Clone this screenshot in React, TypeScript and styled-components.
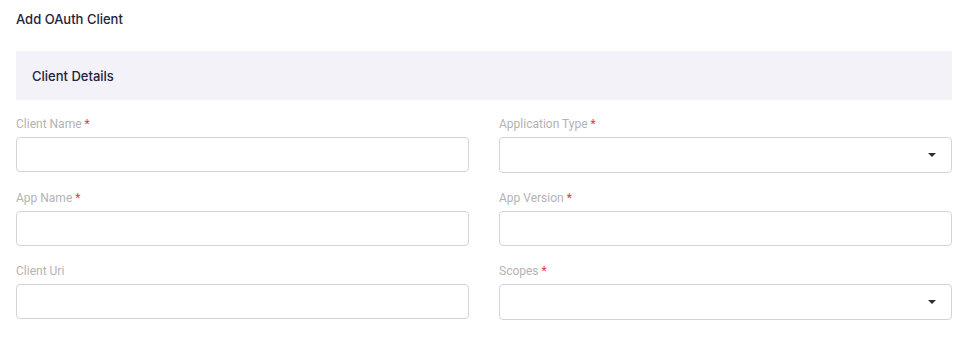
import React from 'react';
import styled, { createGlobalStyle } from 'styled-components';

const GlobalStyle = createGlobalStyle`
  html, body {
    margin: 0;
    padding: 0;
    background: #ffffff;
    font-family: Roboto, "Liberation Sans", Arial, sans-serif;
  }
`;

// ページ全体
const Page = styled.div`
  padding: 10px 23px 0 16px;
`;

const Title = styled.h1`
  margin: 0 0 23px;
  font-family: Inter, Roboto, sans-serif;
  font-size: 13px;
  line-height: 18px;
  font-weight: 500;
  color: #24223d;
`;

// セクション見出し
const SectionHeader = styled.div`
  height: 49px;
  display: flex;
  align-items: center;
  padding-left: 16px;
  background: #f3f2f8;
  font-family: Inter, Roboto, sans-serif;
  font-size: 13px;
  font-weight: 500;
  color: #24223d;
`;

const FormGrid = styled.div`
  display: grid;
  grid-template-columns: 1fr 1fr;
  column-gap: 30px;
  row-gap: 17px;
  padding-top: 16px;
  align-items: start;
`;

const Field = styled.div`
  display: flex;
  flex-direction: column;
  gap: 5px;
`;

const Label = styled.label`
  font-size: 12px;
  line-height: 16px;
  color: #b3b3b3;
`;

const Required = styled.span`
  color: #e8344e;
  margin-left: 3px;
`;

const TextInput = styled.input`
  box-sizing: border-box;
  width: 100%;
  height: 35px;
  border: 1px solid #d4d4d4;
  border-radius: 4px;
  padding: 0 10px;
  font: inherit;
  font-size: 13px;
  outline: none;
`;

const SelectBox = styled.div`
  box-sizing: border-box;
  height: 36px;
  border: 1px solid #d4d4d4;
  border-radius: 4px;
  display: flex;
  align-items: center;
  justify-content: flex-end;
  padding-right: 15px;
`;

const Caret = () => (
  <svg width="8" height="4" viewBox="0 0 8 4">
    <path d="M0 0 L8 0 L4 4 Z" fill="#2e2e2e" />
  </svg>
);

type FieldDef = { label: string; required?: boolean; kind: 'input' | 'select' };

const fields: FieldDef[] = [
  { label: 'Client Name', required: true, kind: 'input' },
  { label: 'Application Type', required: true, kind: 'select' },
  { label: 'App Name', required: true, kind: 'input' },
  { label: 'App Version', required: true, kind: 'input' },
  { label: 'Client Uri', kind: 'input' },
  { label: 'Scopes', required: true, kind: 'select' },
];

const App: React.FC = () => (
  <>
    <GlobalStyle />
    <Page>
      <Title>Add OAuth Client</Title>
      <SectionHeader>Client Details</SectionHeader>
      <FormGrid>
        {fields.map((f) => (
          <Field key={f.label}>
            <Label>
              {f.label}
              {f.required && <Required>*</Required>}
            </Label>
            {f.kind === 'input' ? (
              <TextInput type="text" />
            ) : (
              <SelectBox>
                <Caret />
              </SelectBox>
            )}
          </Field>
        ))}
      </FormGrid>
    </Page>
  </>
);

export default App;
